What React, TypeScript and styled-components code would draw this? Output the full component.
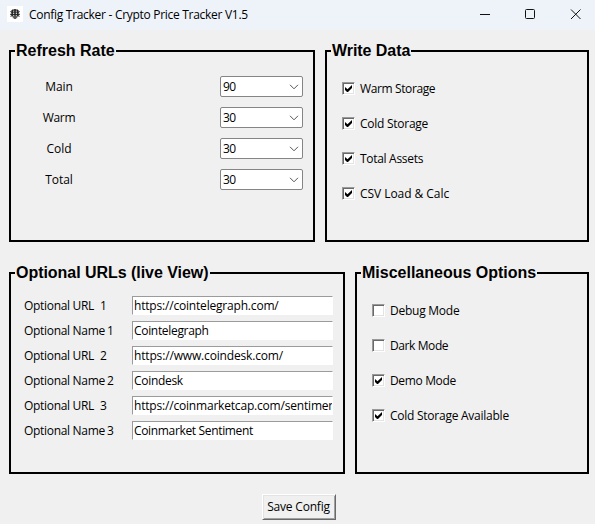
import React, { useState } from 'react';
import styled, { createGlobalStyle } from 'styled-components';

const GlobalStyle = createGlobalStyle`
  * { box-sizing: border-box; }
  body { margin: 0; background: #f0f0f0; }
`;

const Window = styled.div`
  width: 595px;
  height: 524px;
  overflow: hidden;
  background: #f0f0f0;
  color: #000;
  font: 12px/16px "Open Sans", "Noto Sans", sans-serif;
`;

const TitleBar = styled.header`
  display: flex;
  align-items: center;
  height: 30px;
  padding: 0 13px 2px 7px;
  background: #eef3fa;
`;

const AppIcon = styled.svg`
  width: 16px;
  height: 16px;
  margin-right: 6px;
  background: #fff;
`;

const Text = styled.span<{ $tracking?: number }>`
  letter-spacing: ${(p) => p.$tracking ?? 0}px;
  white-space: pre;
`;

const Title = styled(Text)`
  padding-top: 2px;
`;

const WindowControls = styled.div`
  display: flex;
  gap: 34px;
  margin-left: auto;
  padding-right: 1px;
`;

const ControlIcon = styled.svg`
  display: block;
  width: 11px;
  height: 11px;
  fill: none;
  stroke: #111;
`;

const Content = styled.main`
  display: flex;
  flex-direction: column;
  padding: 20px 6px 0 9px;
`;

const PanelRow = styled.div<{ $height: number; $gapBelow: number }>`
  display: flex;
  gap: 10px;
  height: ${(p) => p.$height}px;
  margin-bottom: ${(p) => p.$gapBelow}px;
`;

const Panel = styled.section<{ $width: number }>`
  width: ${(p) => p.$width}px;
  height: 100%;
  border: 2px solid #000;
`;

const Legend = styled.h2<{ $tracking?: number }>`
  width: max-content;
  height: 20px;
  margin: -11px 0 0 4px;
  padding: 0 1px;
  background: #f0f0f0;
  font: bold 16px/20px "Liberation Sans", Arial, sans-serif;
  letter-spacing: ${(p) => p.$tracking ?? 0}px;
  white-space: nowrap;
`;

const RateList = styled.div`
  display: grid;
  grid-template-columns: 78px 83px;
  grid-auto-rows: 21px;
  column-gap: 122px;
  row-gap: 10px;
  align-items: center;
  margin: 15px 0 0 9px;
`;

const RateLabel = styled.label`
  text-align: center;
`;

const Combo = styled.div`
  display: flex;
  align-items: center;
  justify-content: space-between;
  height: 21px;
  padding: 0 3px 0 2px;
  border: 1px solid #858585;
  border-radius: 2px;
  background: #fff;
`;

const Chevron = styled.svg`
  width: 10px;
  height: 6px;
  fill: none;
  stroke: #555;
`;

const CheckList = styled.div`
  display: flex;
  flex-direction: column;
  gap: 19px;
  margin: 19px 0 0 15px;
`;

const CheckRow = styled.label`
  display: flex;
  align-items: center;
  gap: 5px;
  height: 16px;
`;

const CheckLabel = styled(Text)`
  padding-top: 2px;
`;

const CheckBox = styled.button`
  display: block;
  width: 13px;
  height: 13px;
  padding: 0;
  border: 1px solid;
  border-color: #9a9a9a #fff #fff #9a9a9a;
  background: #fff;
  box-shadow: inset 1px 1px #696969, inset -1px -1px #e3e3e3;
`;

const CheckMark = styled.svg`
  display: block;
  width: 11px;
  height: 11px;
  fill: #000;
`;

const UrlForm = styled.div`
  display: grid;
  grid-template-columns: 108px 201px;
  grid-auto-rows: 19px;
  row-gap: 6px;
  margin: 13px 0 0 13px;
`;

const UrlLabel = styled.label`
  display: flex;
  align-items: center;
  padding-top: 1px;
`;

const LabelName = styled.span<{ $isUrl: boolean }>`
  width: ${(p) => (p.$isUrl ? 76 : 83)}px;
  letter-spacing: -0.31px;
`;

const Entry = styled.div`
  height: 19px;
  padding: 1px 0 0 1px;
  border: 1px solid;
  border-color: #9b9b9b #fff #fff #9b9b9b;
  background: #fff;
  overflow: hidden;
`;

const SaveButton = styled.button`
  align-self: flex-start;
  width: 74px;
  height: 26px;
  margin-left: 253px;
  padding: 0 1px 0 0;
  border: 1px solid;
  border-color: #fff #696969 #696969 #fff;
  background: #f0f0f0;
  box-shadow: inset 1px 1px #e3e3e3, inset -1px -1px #a0a0a0;
  color: #000;
  font: inherit;
`;

const rates = [
  { label: 'Main', value: '90', tracking: -0.1 },
  { label: 'Warm', value: '30', tracking: -0.3 },
  { label: 'Cold', value: '30', tracking: 0 },
  { label: 'Total', value: '30', tracking: -0.1 },
];

interface Option {
  label: string;
  tracking: number;
  checked: boolean;
}

const writeOptions: Option[] = [
  { label: 'Warm Storage', tracking: -0.38, checked: true },
  { label: 'Cold Storage', tracking: -0.26, checked: true },
  { label: 'Total Assets', tracking: -0.3, checked: true },
  { label: 'CSV Load & Calc', tracking: -0.05, checked: true },
];

const miscOptions: Option[] = [
  { label: 'Debug Mode', tracking: -0.25, checked: false },
  { label: 'Dark Mode', tracking: -0.4, checked: false },
  { label: 'Demo Mode', tracking: -0.35, checked: true },
  { label: 'Cold Storage Available', tracking: -0.25, checked: true },
];

const entries = [
  { name: 'Optional URL', index: 1, value: 'https://cointelegraph.com/', tracking: -0.19 },
  { name: 'Optional Name', index: 1, value: 'Cointelegraph', tracking: -0.32 },
  { name: 'Optional URL', index: 2, value: 'https://www.coindesk.com/', tracking: -0.16 },
  { name: 'Optional Name', index: 2, value: 'Coindesk', tracking: -0.3 },
  { name: 'Optional URL', index: 3, value: 'https://coinmarketcap.com/sentiment/', tracking: -0.19 },
  { name: 'Optional Name', index: 3, value: 'Coinmarket Sentiment', tracking: -0.34 },
];

function Check({ option }: { option: Option }) {
  const [checked, setChecked] = useState(option.checked);
  return (
    <CheckRow>
      <CheckBox
        type="button"
        role="checkbox"
        aria-checked={checked}
        onClick={() => setChecked(!checked)}
      >
        {checked && (
          <CheckMark viewBox="0 0 11 11">
            <path d="M2 4v3l2 2h1l4-4V2L4.5 6.3Z" />
          </CheckMark>
        )}
      </CheckBox>
      <CheckLabel $tracking={option.tracking}>{option.label}</CheckLabel>
    </CheckRow>
  );
}

export default function App() {
  return (
    <Window>
      <GlobalStyle />
      <TitleBar>
        <AppIcon viewBox="0 0 16 16">
          <path d="M5 4.2h6M4 6.2h8M3.2 8.3h9.6" stroke="#333" strokeWidth="1.3" />
          <path d="M8 3v10M5.2 4v6.5M10.8 4v6.5" stroke="#222" strokeWidth="1.5" />
          <path d="M3.2 5.5l1.5.8M12.8 5.5l-1.5.8M3.4 10.3l1.6-.8M12.6 10.3L11 9.5M6.3 9.5v2.8M9.7 9.5v2.8" stroke="#444" />
        </AppIcon>
        <Title $tracking={-0.29}>Config Tracker - Crypto Price Tracker V1.5</Title>
        <WindowControls>
          <ControlIcon viewBox="0 0 11 11"><path d="M0 5.5h10" /></ControlIcon>
          <ControlIcon viewBox="0 0 11 11"><rect x="0.5" y="0.5" width="9" height="9" rx="1" /></ControlIcon>
          <ControlIcon viewBox="0 0 11 11"><path d="M1 .5l9.5 9.5M10.5 .5L1 10" /></ControlIcon>
        </WindowControls>
      </TitleBar>
      <Content>
        <PanelRow $height={192} $gapBelow={30}>
          <Panel $width={306}>
            <Legend>Refresh Rate</Legend>
            <RateList>
              {rates.map((rate) => (
                <React.Fragment key={rate.label}>
                  <RateLabel><Text $tracking={rate.tracking}>{rate.label}</Text></RateLabel>
                  <Combo>
                    <Text $tracking={-0.5}>{rate.value}</Text>
                    <Chevron viewBox="0 0 10 6"><path d="M1 .8l4 4 4-4" /></Chevron>
                  </Combo>
                </React.Fragment>
              ))}
            </RateList>
          </Panel>
          <Panel $width={264}>
            <Legend $tracking={-0.05}>Write Data</Legend>
            <CheckList>
              {writeOptions.map((o) => <Check key={o.label} option={o} />)}
            </CheckList>
          </Panel>
        </PanelRow>
        <PanelRow $height={202} $gapBelow={20}>
          <Panel $width={336}>
            <Legend $tracking={-0.04}>Optional URLs (live View)</Legend>
            <UrlForm>
              {entries.map((e) => (
                <React.Fragment key={e.name + e.index}>
                  <UrlLabel>
                    <LabelName $isUrl={e.name === 'Optional URL'}>{e.name}</LabelName>
                    <Text>{e.index}</Text>
                  </UrlLabel>
                  <Entry><Text $tracking={e.tracking}>{e.value}</Text></Entry>
                </React.Fragment>
              ))}
            </UrlForm>
          </Panel>
          <Panel $width={234}>
            <Legend>Miscellaneous Options</Legend>
            <CheckList>
              {miscOptions.map((o) => <Check key={o.label} option={o} />)}
            </CheckList>
          </Panel>
        </PanelRow>
        <SaveButton type="button"><Text $tracking={-0.2}>Save Config</Text></SaveButton>
      </Content>
    </Window>
  );
}
